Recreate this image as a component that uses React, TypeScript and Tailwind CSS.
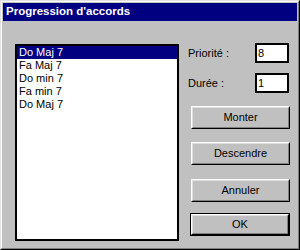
import React from "react";

const font = { fontFamily: '"Liberation Sans", Arial, sans-serif' };

function Btn({ label, isDefault, mt }: { label: string; isDefault?: boolean; mt: string }) {
  const inner = (
    <div className="border-t border-l border-b border-r border-t-white border-l-white border-b-black border-r-black h-full">
      <div className="border-t border-l border-b border-r border-t-[#dfdfdf] border-l-[#dfdfdf] border-b-[#808080] border-r-[#808080] h-full flex items-center justify-center text-[11px] text-black">
        {label}
      </div>
    </div>
  );
  return isDefault ? (
    <div className={`ml-[2px] w-[100px] h-[23px] border border-black ${mt}`}>{inner}</div>
  ) : (
    <div className={`ml-[3px] w-[99px] h-[23px] ${mt}`}>{inner}</div>
  );
}

export default function App() {
  const items = ["Do Maj 7", "Fa Maj 7", "Do min 7", "Fa min 7", "Do Maj 7"];
  return (
    <div style={font} className="w-[300px] h-[250px] bg-[#c0c0c0] border-t border-l border-b border-r border-t-[#dfdfdf] border-l-[#dfdfdf] border-b-black border-r-black">
      <div className="w-full h-full border-t border-l border-b border-r border-t-white border-l-white border-b-[#808080] border-r-[#808080] p-[1px] flex flex-col">
        <div className="h-[18px] bg-[#000080] flex items-center pl-[3px]">
          <span className="text-white font-bold text-[11.5px] leading-none">Progression d'accords</span>
        </div>
        <div className="flex flex-row pl-[12px] pt-[22px]">
          <div className="mt-[1px] w-[164px] h-[197px] bg-white border-2 border-black flex flex-col">
            {items.map((t, i) => (
              <div
                key={i}
                className={`h-[13px] flex items-center pl-[2px] text-[11px] leading-none ${i === 0 ? "bg-[#000080] text-white" : "text-black"}`}
              >
                {t}
              </div>
            ))}
          </div>
          <div className="ml-[9px] w-[102px] flex flex-col">
            <div className="h-[20px] flex items-center justify-between text-[11px] text-black">
              <span>Priorité :</span>
              <div className="w-[34px] h-[20px] mr-[1px] bg-white border-2 border-black flex items-center pl-[1px] text-[11px]">8</div>
            </div>
            <div className="mt-[10px] h-[20px] flex items-center justify-between text-[11px] text-black">
              <span>Durée :</span>
              <div className="w-[34px] h-[20px] mr-[1px] bg-white border-2 border-black flex items-center pl-[1px] text-[11px]">1</div>
            </div>
            <Btn label="Monter" mt="mt-[13px]" />
            <Btn label="Descendre" mt="mt-[13px]" />
            <Btn label="Annuler" mt="mt-[14px]" />
            <Btn label="OK" isDefault mt="mt-[11px]" />
          </div>
        </div>
      </div>
    </div>
  );
}
